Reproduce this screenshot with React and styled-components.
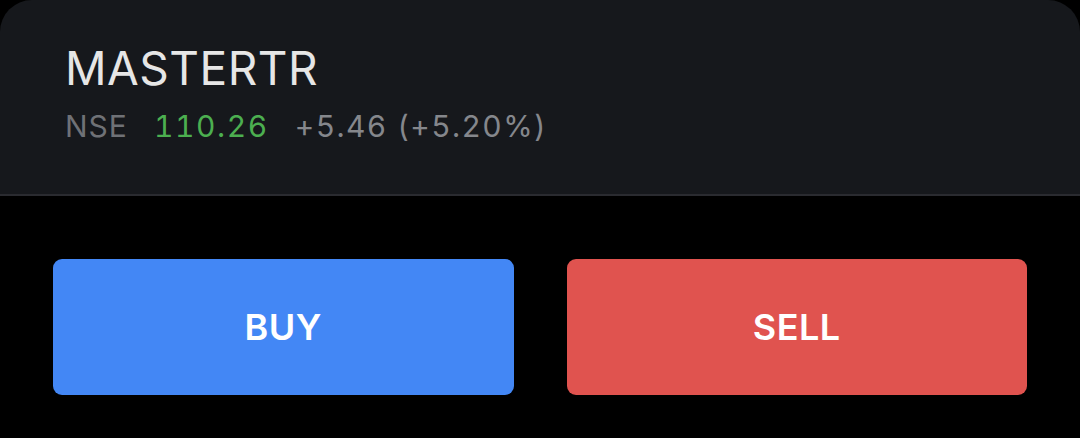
import React from "react";
import styled, { createGlobalStyle } from "styled-components";

const GlobalStyle = createGlobalStyle`
  html, body {
    margin: 0;
    padding: 0;
    background: #000000;
  }
  body {
    font-family: 'Inter', 'Noto Sans', sans-serif;
    -webkit-font-smoothing: antialiased;
  }
`;

const Page = styled.div`
  width: 1080px;
  height: 438px;
  background: #000000;
  overflow: hidden;
`;

const Header = styled.section`
  height: 196px;
  box-sizing: border-box;
  padding: 40px 65px 0;
  background: #16181c;
  border-radius: 32px 32px 0 0;
  border-bottom: 2px solid #2a2b30;
`;

const Symbol = styled.h1`
  margin: 0;
  font-family: 'Inter', sans-serif;
  font-weight: 400;
  font-size: 46px;
  line-height: 56px;
  letter-spacing: 0.5px;
  color: #e6e6e6;
`;

const Quote = styled.div`
  display: flex;
  align-items: baseline;
  gap: 26px;
  margin-top: 10px;
  font-family: 'Inter', sans-serif;
  font-size: 30px;
  line-height: 40px;
  letter-spacing: 1px;
  font-variant-numeric: tabular-nums;
`;

const Exchange = styled.span`
  color: #6f7176;
`;

const Price = styled.span`
  letter-spacing: 1.6px;
  color: ${(props) => (props.up ? "#4caf50" : "#e0524e")};
`;

const Change = styled.span`
  letter-spacing: 1.4px;
  color: #85878c;
`;

const Actions = styled.div`
  display: grid;
  grid-template-columns: 1fr 1fr;
  gap: 53px;
  padding: 63px 53px 0;
`;

const ActionButton = styled.button`
  height: 136px;
  border: none;
  border-radius: 9px;
  background: ${(props) => props.color};
  color: #ffffff;
  font-family: 'Inter', sans-serif;
  font-weight: 600;
  font-size: 36px;
  letter-spacing: 0.5px;
  cursor: pointer;
`;

function App() {
  return (
    <Page>
      <GlobalStyle />
      <Header>
        <Symbol>MASTERTR</Symbol>
        <Quote>
          <Exchange>NSE</Exchange>
          <Price up>110.26</Price>
          <Change>+5.46 (+5.20%)</Change>
        </Quote>
      </Header>
      <Actions>
        <ActionButton color="#4387f5">BUY</ActionButton>
        <ActionButton color="#e0534f">SELL</ActionButton>
      </Actions>
    </Page>
  );
}

export default App;
